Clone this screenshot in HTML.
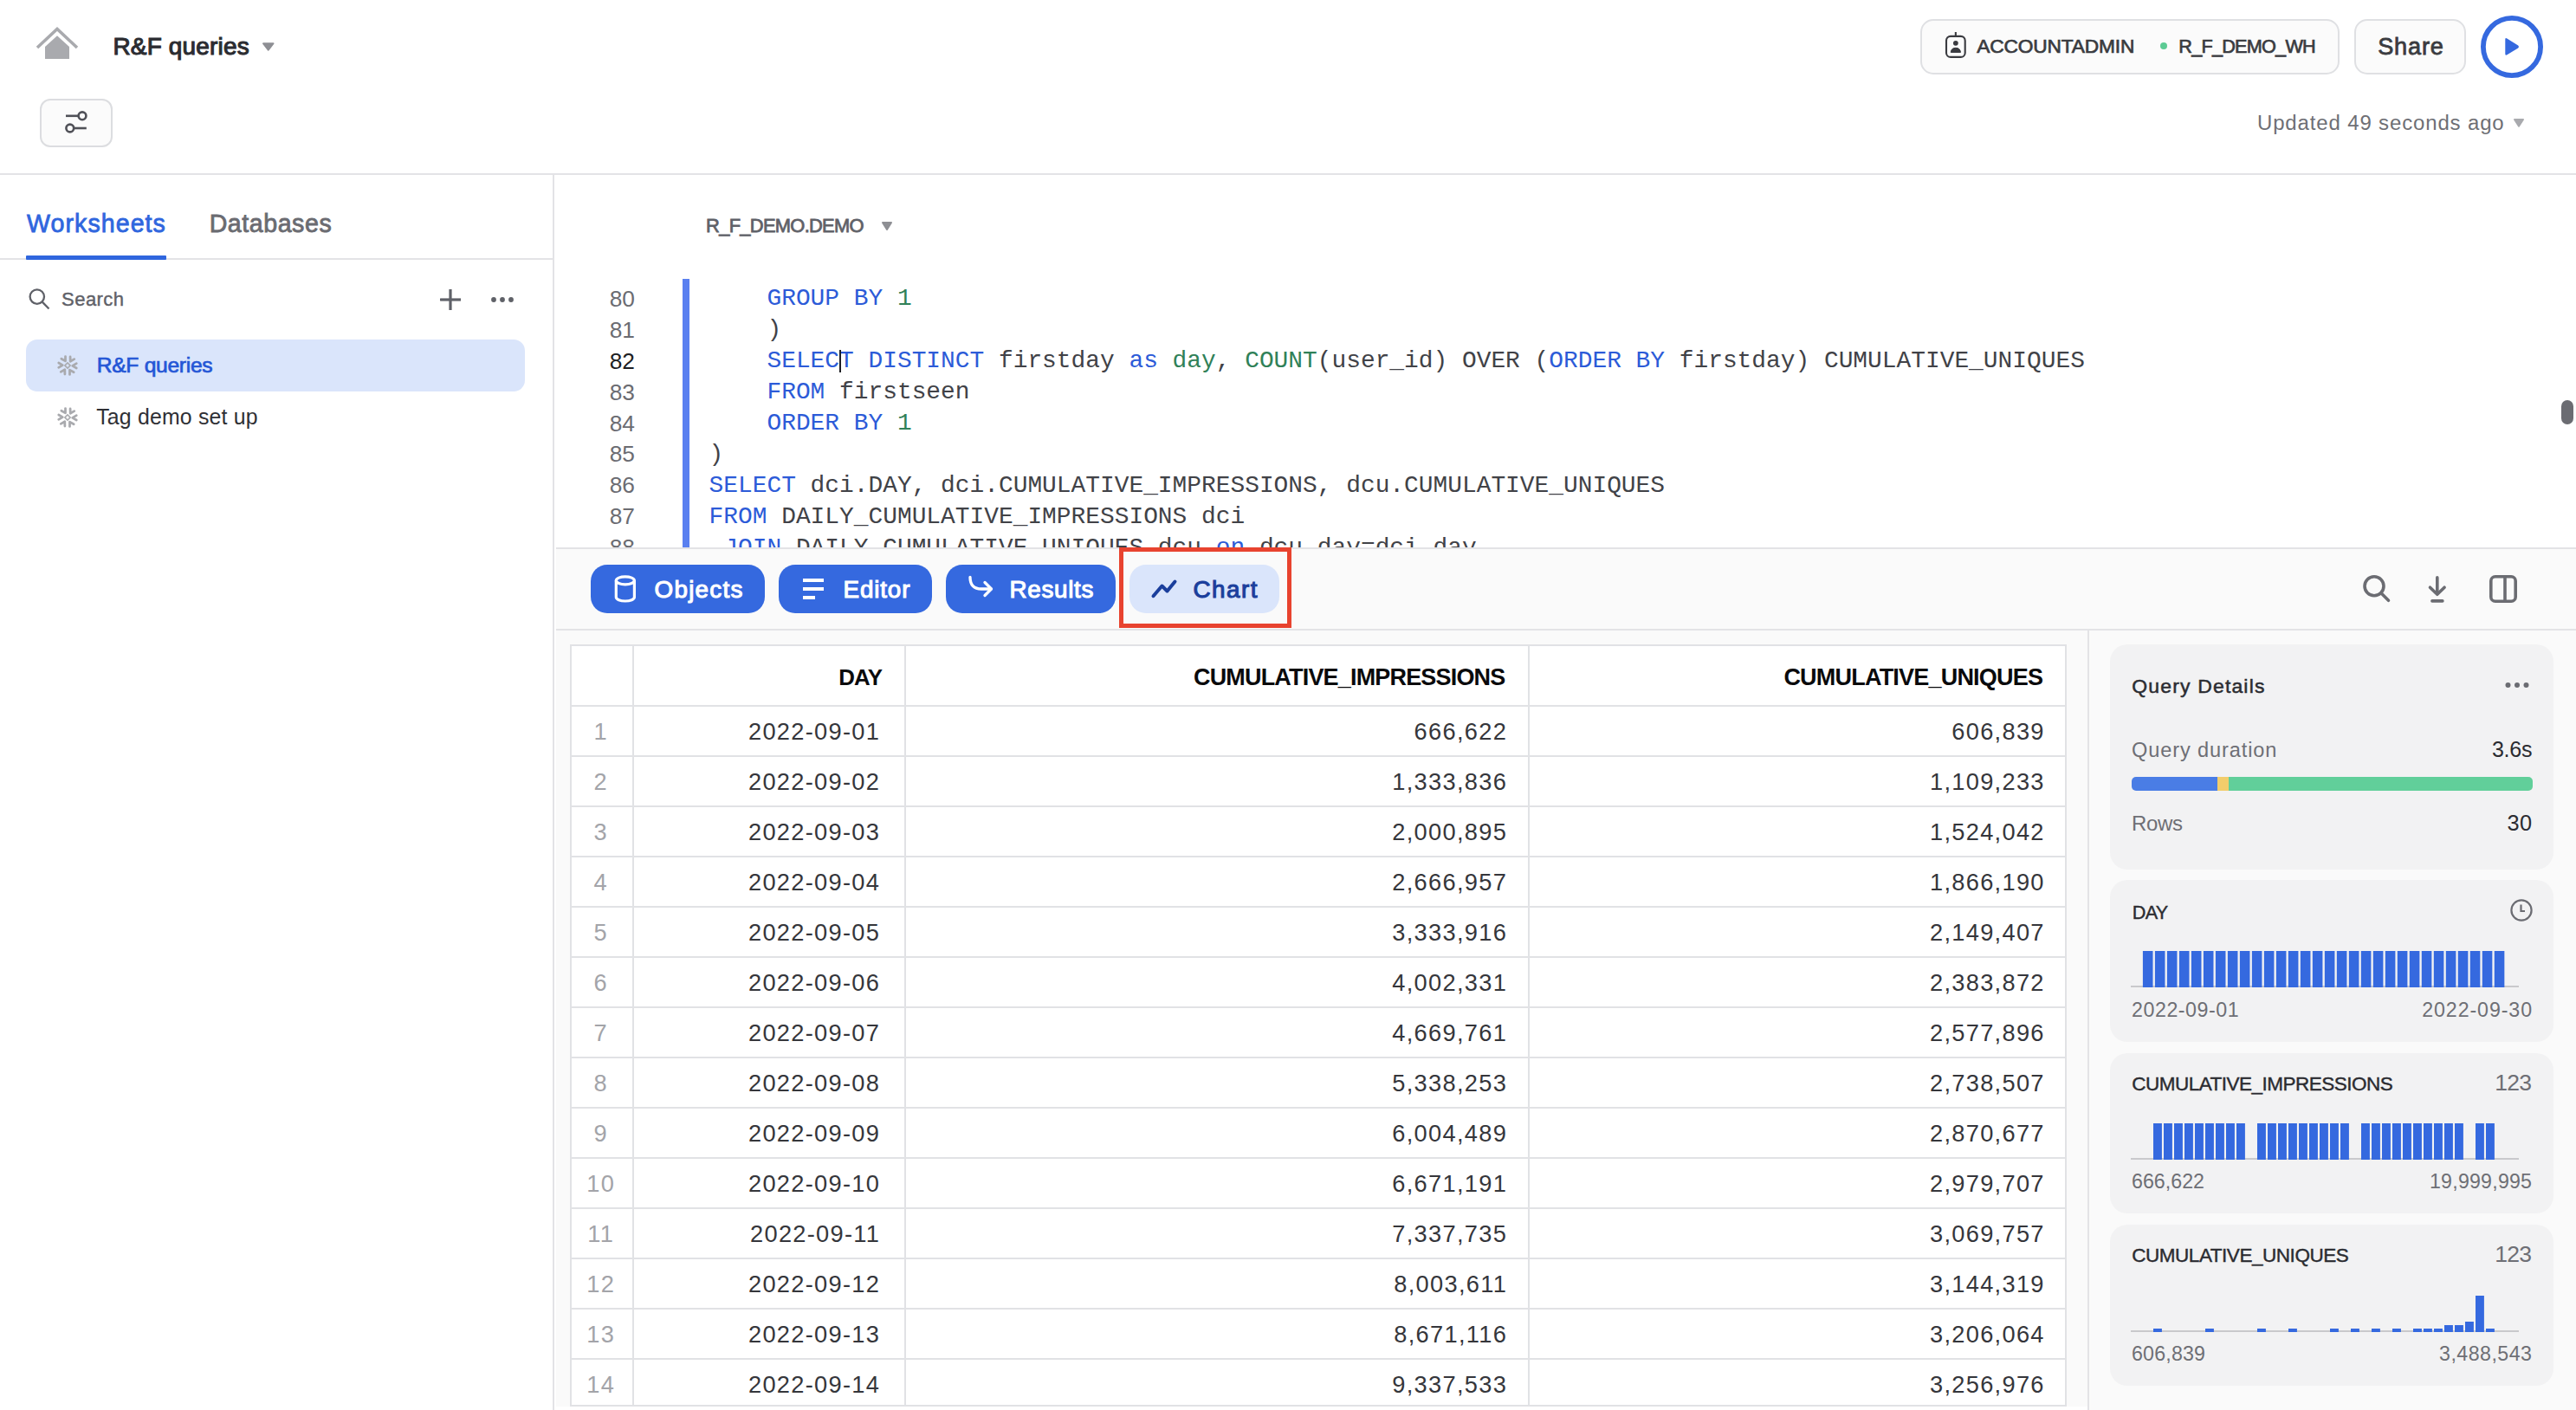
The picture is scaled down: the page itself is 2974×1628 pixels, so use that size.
<!DOCTYPE html>
<html><head><meta charset="utf-8"><title>R&amp;F queries</title>
<style>
html,body{margin:0;padding:0;background:#fff;}
body{width:2974px;height:1628px;position:relative;overflow:hidden;font-family:"Liberation Sans", sans-serif;}
.t{position:absolute;white-space:nowrap;}
.b{position:absolute;}
.code{position:absolute;margin:0;font-family:"Liberation Mono", monospace;white-space:pre;}
</style></head><body>
<div class="b" style="left:0px;top:200px;width:2974px;height:2px;background:#e3e3e6;"></div>
<svg class="b" style="left:40px;top:28px" width="52" height="44" viewBox="0 0 52 44"><path d="M3 27 L26 5.5 L49 27" fill="none" stroke="#a9aaae" stroke-width="3.6"/><path d="M12 26 L26 13.2 L40 26 L40 40 L12 40 Z" fill="#a9aaae"/></svg>
<div class="t" style="left:130.45px;top:40.33px;font-size:27.94px;line-height:27.94px;color:#2b2c31;letter-spacing:0.195px;-webkit-text-stroke:1.1px #2b2c31;">R&amp;F queries</div>
<svg class="b" style="left:300px;top:46px" width="20" height="16" viewBox="0 0 20 16"><path d="M4 4.2 L15.5 4.2 L9.75 11.7 Z" fill="#8e8f94" stroke="#8e8f94" stroke-width="2" stroke-linejoin="round"/></svg>
<div class="b" style="left:46px;top:114px;width:84px;height:56px;background:#fbfbfb;border:2px solid #dcdde0;box-sizing:border-box;border-radius:12px;"></div>
<svg class="b" style="left:70px;top:124px" width="36" height="34" viewBox="0 0 36 34"><line x1="6" y1="9.8" x2="20.5" y2="9.8" stroke="#505158" stroke-width="2.6"/><circle cx="25" cy="9.8" r="4.4" fill="none" stroke="#505158" stroke-width="2.6"/><circle cx="10.8" cy="24" r="4.4" fill="none" stroke="#505158" stroke-width="2.6"/><line x1="15.3" y1="24" x2="29.8" y2="24" stroke="#505158" stroke-width="2.6"/></svg>
<div class="b" style="left:2217px;top:22px;width:484px;height:64px;background:#fbfbfb;border:2px solid #dfe0e3;box-sizing:border-box;border-radius:15px;"></div>
<svg class="b" style="left:2240px;top:34px" width="36" height="36" viewBox="0 0 36 36"><rect x="7" y="7.9" width="21.7" height="24" rx="5" fill="none" stroke="#3a3b40" stroke-width="2.1"/><line x1="17.85" y1="3" x2="17.85" y2="8" stroke="#3a3b40" stroke-width="2.1"/><circle cx="17.85" cy="15.8" r="2.9" fill="#3a3b40"/><path d="M12.2 26.4 Q12.8 21.3 17.85 21.3 Q22.9 21.3 23.5 26.4 Z" fill="#3a3b40" stroke="#3a3b40" stroke-width="1" stroke-linejoin="round"/></svg>
<div class="t" style="left:2282.35px;top:41.83px;font-size:22.73px;line-height:22.73px;color:#3a3b40;letter-spacing:-0.164px;-webkit-text-stroke:0.7px #3a3b40;">ACCOUNTADMIN</div>
<div class="b" style="left:2494px;top:49px;width:8px;height:8px;background:#5ccb94;border-radius:4px;"></div>
<div class="t" style="left:2515.35px;top:42.86px;font-size:21.67px;line-height:21.67px;color:#3a3b40;letter-spacing:-0.770px;-webkit-text-stroke:0.7px #3a3b40;">R_F_DEMO_WH</div>
<div class="b" style="left:2718px;top:22px;width:129px;height:64px;background:#fbfbfb;border:2px solid #dfe0e3;box-sizing:border-box;border-radius:15px;"></div>
<div class="t" style="left:2745.20px;top:39.64px;font-size:27.12px;line-height:27.12px;color:#3a3b40;letter-spacing:0.850px;-webkit-text-stroke:0.8px #3a3b40;">Share</div>
<svg class="b" style="left:2860px;top:14px" width="80" height="80" viewBox="0 0 80 80"><circle cx="40" cy="40" r="33.1" fill="none" stroke="#3569df" stroke-width="5.8"/><path d="M32.3 31.5 L32.3 48.3 Q32.3 50.6 34.4 49.3 L47.2 41.4 Q48.9 39.9 47.2 38.5 L34.4 30.5 Q32.3 29.3 32.3 31.5 Z" fill="#3569df"/></svg>
<div class="t" style="left:2606.00px;top:130.31px;font-size:23.98px;line-height:23.98px;color:#6e6f75;letter-spacing:0.864px;">Updated 49 seconds ago</div>
<svg class="b" style="left:2898px;top:134px" width="20" height="16" viewBox="0 0 20 16"><path d="M5 4 L15 4 L10 11.6 Z" fill="#a9aaae" stroke="#a9aaae" stroke-width="2" stroke-linejoin="round"/></svg>
<div class="b" style="left:638px;top:202px;width:2px;height:1426px;background:#e3e3e6;"></div>
<div class="b" style="left:0px;top:298px;width:638px;height:2px;background:#e3e3e6;"></div>
<div class="t" style="left:31.00px;top:244.11px;font-size:28.58px;line-height:28.58px;color:#2f66de;letter-spacing:1.061px;-webkit-text-stroke:0.8px #2f66de;">Worksheets</div>
<div class="b" style="left:30px;top:295px;width:162px;height:5px;background:#2f66de;border-radius:1px;"></div>
<div class="t" style="left:241.70px;top:244.11px;font-size:28.58px;line-height:28.58px;color:#6a6b71;letter-spacing:0.544px;-webkit-text-stroke:0.8px #6a6b71;">Databases</div>
<svg class="b" style="left:30px;top:330px" width="32" height="32" viewBox="0 0 32 32"><circle cx="12.8" cy="12.6" r="8.2" fill="none" stroke="#5f6168" stroke-width="2.3"/><line x1="18.8" y1="18.6" x2="26.5" y2="26.5" stroke="#5f6168" stroke-width="2.3"/></svg>
<div class="t" style="left:71.10px;top:335.37px;font-size:22.06px;line-height:22.06px;color:#5f6168;letter-spacing:0.410px;-webkit-text-stroke:0.4px #5f6168;">Search</div>
<svg class="b" style="left:504px;top:330px" width="32" height="32" viewBox="0 0 32 32"><line x1="16" y1="4" x2="16" y2="28" stroke="#5f6168" stroke-width="3.2"/><line x1="4" y1="16" x2="28" y2="16" stroke="#5f6168" stroke-width="3.2"/></svg>
<svg class="b" style="left:562px;top:338px" width="36" height="16" viewBox="0 0 36 16"><circle cx="8" cy="8" r="2.9" fill="#5f6168"/><circle cx="18" cy="8" r="2.9" fill="#5f6168"/><circle cx="28" cy="8" r="2.9" fill="#5f6168"/></svg>
<div class="b" style="left:30px;top:392px;width:576px;height:60px;background:#dae5fb;border-radius:13px;"></div>
<svg class="b" style="left:54px;top:398px" width="48" height="48" viewBox="0 0 48 48"><g transform="translate(24 24) scale(0.92) translate(-24 -24)"><g transform="rotate(0 24 24)"><path d="M21.3 12.7 L21.3 18.4 L16.2 15.6" fill="none" stroke="#a9aaae" stroke-width="3" stroke-linecap="round" stroke-linejoin="round"/></g><g transform="rotate(-60 24 24)"><path d="M21.3 12.7 L21.3 18.4 L16.2 15.6" fill="none" stroke="#a9aaae" stroke-width="3" stroke-linecap="round" stroke-linejoin="round"/></g><g transform="rotate(-120 24 24)"><path d="M21.3 12.7 L21.3 18.4 L16.2 15.6" fill="none" stroke="#a9aaae" stroke-width="3" stroke-linecap="round" stroke-linejoin="round"/></g><g transform="rotate(-180 24 24)"><path d="M21.3 12.7 L21.3 18.4 L16.2 15.6" fill="none" stroke="#a9aaae" stroke-width="3" stroke-linecap="round" stroke-linejoin="round"/></g><g transform="rotate(-240 24 24)"><path d="M21.3 12.7 L21.3 18.4 L16.2 15.6" fill="none" stroke="#a9aaae" stroke-width="3" stroke-linecap="round" stroke-linejoin="round"/></g><g transform="rotate(-300 24 24)"><path d="M21.3 12.7 L21.3 18.4 L16.2 15.6" fill="none" stroke="#a9aaae" stroke-width="3" stroke-linecap="round" stroke-linejoin="round"/></g></g><rect x="21.8" y="21.8" width="4.4" height="4.4" transform="rotate(45 24 24)" fill="none" stroke="#a9aaae" stroke-width="1.6"/></svg>
<div class="t" style="left:111.75px;top:410.19px;font-size:24.62px;line-height:24.62px;color:#2456d6;letter-spacing:-0.290px;-webkit-text-stroke:0.7px #2456d6;">R&amp;F queries</div>
<svg class="b" style="left:54px;top:458px" width="48" height="48" viewBox="0 0 48 48"><g transform="translate(24 24) scale(0.92) translate(-24 -24)"><g transform="rotate(0 24 24)"><path d="M21.3 12.7 L21.3 18.4 L16.2 15.6" fill="none" stroke="#a9aaae" stroke-width="3" stroke-linecap="round" stroke-linejoin="round"/></g><g transform="rotate(-60 24 24)"><path d="M21.3 12.7 L21.3 18.4 L16.2 15.6" fill="none" stroke="#a9aaae" stroke-width="3" stroke-linecap="round" stroke-linejoin="round"/></g><g transform="rotate(-120 24 24)"><path d="M21.3 12.7 L21.3 18.4 L16.2 15.6" fill="none" stroke="#a9aaae" stroke-width="3" stroke-linecap="round" stroke-linejoin="round"/></g><g transform="rotate(-180 24 24)"><path d="M21.3 12.7 L21.3 18.4 L16.2 15.6" fill="none" stroke="#a9aaae" stroke-width="3" stroke-linecap="round" stroke-linejoin="round"/></g><g transform="rotate(-240 24 24)"><path d="M21.3 12.7 L21.3 18.4 L16.2 15.6" fill="none" stroke="#a9aaae" stroke-width="3" stroke-linecap="round" stroke-linejoin="round"/></g><g transform="rotate(-300 24 24)"><path d="M21.3 12.7 L21.3 18.4 L16.2 15.6" fill="none" stroke="#a9aaae" stroke-width="3" stroke-linecap="round" stroke-linejoin="round"/></g></g><rect x="21.8" y="21.8" width="4.4" height="4.4" transform="rotate(45 24 24)" fill="none" stroke="#a9aaae" stroke-width="1.6"/></svg>
<div class="t" style="left:111.20px;top:469.97px;font-size:24.85px;line-height:24.85px;color:#2f3035;letter-spacing:0.196px;">Tag demo set up</div>
<div class="t" style="left:815.10px;top:250.46px;font-size:21.89px;line-height:21.89px;color:#5f6168;letter-spacing:-0.696px;-webkit-text-stroke:0.8px #5f6168;">R_F_DEMO.DEMO</div>
<svg class="b" style="left:1014px;top:252px" width="20" height="18" viewBox="0 0 20 18"><path d="M5 5 L15 5 L10 13 Z" fill="#8e8f94" stroke="#8e8f94" stroke-width="2" stroke-linejoin="round"/></svg>
<div class="b" style="left:788px;top:322px;width:8px;height:310px;background:#5a80f0;"></div>
<div class="t" style="left:703.65px;top:331.75px;font-size:26.30px;line-height:26.30px;color:#6b6c72;font-family:"Liberation Mono", monospace;">80</div>
<div class="t" style="left:703.65px;top:367.69px;font-size:26.30px;line-height:26.30px;color:#6b6c72;font-family:"Liberation Mono", monospace;">81</div>
<div class="t" style="left:703.65px;top:403.63px;font-size:26.30px;line-height:26.30px;color:#1e1f24;font-family:"Liberation Mono", monospace;">82</div>
<div class="t" style="left:703.65px;top:439.57px;font-size:26.30px;line-height:26.30px;color:#6b6c72;font-family:"Liberation Mono", monospace;">83</div>
<div class="t" style="left:703.65px;top:475.51px;font-size:26.30px;line-height:26.30px;color:#6b6c72;font-family:"Liberation Mono", monospace;">84</div>
<div class="t" style="left:703.65px;top:511.45px;font-size:26.30px;line-height:26.30px;color:#6b6c72;font-family:"Liberation Mono", monospace;">85</div>
<div class="t" style="left:703.65px;top:547.39px;font-size:26.30px;line-height:26.30px;color:#6b6c72;font-family:"Liberation Mono", monospace;">86</div>
<div class="t" style="left:703.65px;top:583.33px;font-size:26.30px;line-height:26.30px;color:#6b6c72;font-family:"Liberation Mono", monospace;">87</div>
<div class="t" style="left:703.65px;top:619.27px;font-size:26.30px;line-height:26.30px;color:#6b6c72;font-family:"Liberation Mono", monospace;">88</div>
<div class="b" style="left:0;top:0;width:2974px;height:632px;overflow:hidden"><pre class="code" style="left:818.6px;top:327.23px;font-size:27.862px;line-height:35.94px"><span style="color:#414247">    </span><span style="color:#2c5bd8">GROUP</span><span style="color:#414247"> </span><span style="color:#2c5bd8">BY</span><span style="color:#414247"> </span><span style="color:#308158">1</span>
<span style="color:#414247">    )</span>
<span style="color:#414247">    </span><span style="color:#2c5bd8">SELECT</span><span style="color:#414247"> </span><span style="color:#2c5bd8">DISTINCT</span><span style="color:#414247"> firstday </span><span style="color:#2c5bd8">as</span><span style="color:#414247"> </span><span style="color:#308158">day</span><span style="color:#414247">, </span><span style="color:#308158">COUNT</span><span style="color:#414247">(user_id) OVER (</span><span style="color:#2c5bd8">ORDER</span><span style="color:#414247"> </span><span style="color:#2c5bd8">BY</span><span style="color:#414247"> firstday) CUMULATIVE_UNIQUES</span>
<span style="color:#414247">    </span><span style="color:#2c5bd8">FROM</span><span style="color:#414247"> firstseen</span>
<span style="color:#414247">    </span><span style="color:#2c5bd8">ORDER</span><span style="color:#414247"> </span><span style="color:#2c5bd8">BY</span><span style="color:#414247"> </span><span style="color:#308158">1</span>
<span style="color:#414247">)</span>
<span style="color:#2c5bd8">SELECT</span><span style="color:#414247"> dci.DAY, dci.CUMULATIVE_IMPRESSIONS, dcu.CUMULATIVE_UNIQUES</span>
<span style="color:#2c5bd8">FROM</span><span style="color:#414247"> DAILY_CUMULATIVE_IMPRESSIONS dci</span>
<span style="color:#414247"> </span><span style="color:#2c5bd8">JOIN</span><span style="color:#414247"> DAILY_CUMULATIVE_UNIQUES dcu </span><span style="color:#2c5bd8">on</span><span style="color:#414247"> dcu.day=dci.day</span></pre></div>
<div class="b" style="left:969px;top:404px;width:2px;height:26px;background:#1e1f24;"></div>
<div class="b" style="left:2957px;top:462px;width:14px;height:28px;background:#6b6c72;border-radius:7px;"></div>
<div class="b" style="left:642px;top:632px;width:2332px;height:96px;background:#fafafa;"></div>
<div class="b" style="left:642px;top:632px;width:2332px;height:2px;background:#e3e3e6;"></div>
<div class="b" style="left:642px;top:726px;width:2332px;height:2px;background:#e3e3e6;"></div>
<div class="b" style="left:682px;top:652px;width:201px;height:56px;background:#3569df;border-radius:19px;"></div>
<div class="t" style="left:755.55px;top:666.60px;font-size:27.79px;line-height:27.79px;color:#ffffff;letter-spacing:1.275px;-webkit-text-stroke:1.1px #ffffff;">Objects</div>

<svg class="b" style="left:700px;top:658px" width="44" height="44" viewBox="0 0 44 44"><path d="M11.3 12.3 A10.55 4.5 0 0 1 32.4 12.3 L32.4 31.5 A10.55 4.5 0 0 1 11.3 31.5 Z" fill="none" stroke="#fff" stroke-width="3.2"/><path d="M11.3 12.3 A10.55 4.5 0 0 0 32.4 12.3" fill="none" stroke="#fff" stroke-width="3.2"/></svg>
<div class="b" style="left:899px;top:652px;width:177px;height:56px;background:#3569df;border-radius:19px;"></div>
<div class="t" style="left:973.55px;top:666.60px;font-size:27.79px;line-height:27.79px;color:#ffffff;letter-spacing:0.860px;-webkit-text-stroke:1.1px #ffffff;">Editor</div>

<svg class="b" style="left:920px;top:660px" width="40" height="40" viewBox="0 0 40 40"><rect x="7" y="8" width="24" height="4" fill="#fff"/><rect x="7" y="18" width="24" height="4" fill="#fff"/><rect x="7" y="28" width="14" height="4" fill="#fff"/></svg>
<div class="b" style="left:1092px;top:652px;width:196px;height:56px;background:#3569df;border-radius:19px;"></div>
<div class="t" style="left:1165.55px;top:666.60px;font-size:27.79px;line-height:27.79px;color:#ffffff;letter-spacing:0.700px;-webkit-text-stroke:1.1px #ffffff;">Results</div>

<svg class="b" style="left:1112px;top:660px" width="40" height="40" viewBox="0 0 40 40"><path d="M8 6.5 Q8 20 21 20 L32 20" fill="none" stroke="#fff" stroke-width="3.3" stroke-linecap="round"/><path d="M25 12.5 L32.5 20 L25 27.5" fill="none" stroke="#fff" stroke-width="3.3" stroke-linecap="round" stroke-linejoin="round"/></svg>
<div class="b" style="left:1304px;top:652px;width:173px;height:56px;background:#dae5fb;border-radius:19px;"></div>
<div class="t" style="left:1377.55px;top:666.60px;font-size:27.79px;line-height:27.79px;color:#1b3f9c;letter-spacing:1.475px;-webkit-text-stroke:1.1px #1b3f9c;">Chart</div>

<svg class="b" style="left:1324px;top:664px" width="40" height="32" viewBox="0 0 40 32"><path d="M7.5 24.2 L17.5 12.5 L23.5 18.5 L32.5 7.5" fill="none" stroke="#1b3f9c" stroke-width="4" stroke-linecap="round" stroke-linejoin="round"/></svg>
<div class="b" style="left:1292px;top:632px;width:199px;height:93px;border:5px solid #e8432f;box-sizing:border-box;"></div>
<svg class="b" style="left:2722px;top:658px" width="44" height="44" viewBox="0 0 44 44"><circle cx="19" cy="18.8" r="11" fill="none" stroke="#6b6c72" stroke-width="3.6"/><line x1="27" y1="26.8" x2="35.5" y2="35.3" stroke="#6b6c72" stroke-width="3.6" stroke-linecap="round"/></svg>
<svg class="b" style="left:2794px;top:658px" width="40" height="44" viewBox="0 0 40 44"><line x1="19.8" y1="8.8" x2="19.8" y2="27.5" stroke="#6b6c72" stroke-width="3.6" stroke-linecap="round"/><path d="M11.5 20.2 L19.8 28.3 L28.1 20.2" fill="none" stroke="#6b6c72" stroke-width="3.6" stroke-linecap="round" stroke-linejoin="round"/><line x1="13.9" y1="35.9" x2="25.9" y2="35.9" stroke="#6b6c72" stroke-width="3.6" stroke-linecap="round"/></svg>
<svg class="b" style="left:2868px;top:658px" width="44" height="44" viewBox="0 0 44 44"><rect x="7.8" y="7.8" width="28.4" height="28.4" rx="5" fill="none" stroke="#6b6c72" stroke-width="3.6"/><line x1="24" y1="8" x2="24" y2="36" stroke="#6b6c72" stroke-width="3.6"/></svg>
<div class="b" style="left:642px;top:728px;width:2332px;height:900px;background:#fafafa;"></div>
<div class="b" style="left:642px;top:1624px;width:1768px;height:4px;background:#ffffff;"></div>
<div class="b" style="left:2410px;top:728px;width:2px;height:900px;background:#e3e3e6;"></div>
<div class="b" style="left:658px;top:744px;width:1728px;height:880px;background:#ffffff;border:2px solid #e1e2e5;box-sizing:border-box;"></div>
<div class="b" style="left:730px;top:744px;width:2px;height:880px;background:#e1e2e5;"></div>
<div class="b" style="left:1044px;top:744px;width:2px;height:880px;background:#e1e2e5;"></div>
<div class="b" style="left:1764px;top:744px;width:2px;height:880px;background:#e1e2e5;"></div>
<div class="b" style="left:658px;top:814px;width:1728px;height:2px;background:#e1e2e5;"></div>
<div class="b" style="left:658px;top:872px;width:1728px;height:2px;background:#e1e2e5;"></div>
<div class="b" style="left:658px;top:930px;width:1728px;height:2px;background:#e1e2e5;"></div>
<div class="b" style="left:658px;top:988px;width:1728px;height:2px;background:#e1e2e5;"></div>
<div class="b" style="left:658px;top:1046px;width:1728px;height:2px;background:#e1e2e5;"></div>
<div class="b" style="left:658px;top:1104px;width:1728px;height:2px;background:#e1e2e5;"></div>
<div class="b" style="left:658px;top:1162px;width:1728px;height:2px;background:#e1e2e5;"></div>
<div class="b" style="left:658px;top:1220px;width:1728px;height:2px;background:#e1e2e5;"></div>
<div class="b" style="left:658px;top:1278px;width:1728px;height:2px;background:#e1e2e5;"></div>
<div class="b" style="left:658px;top:1336px;width:1728px;height:2px;background:#e1e2e5;"></div>
<div class="b" style="left:658px;top:1394px;width:1728px;height:2px;background:#e1e2e5;"></div>
<div class="b" style="left:658px;top:1452px;width:1728px;height:2px;background:#e1e2e5;"></div>
<div class="b" style="left:658px;top:1510px;width:1728px;height:2px;background:#e1e2e5;"></div>
<div class="b" style="left:658px;top:1568px;width:1728px;height:2px;background:#e1e2e5;"></div>
<div class="t" style="left:968.20px;top:769.87px;font-size:25.87px;line-height:25.87px;color:#0a0a0c;font-weight:700;letter-spacing:-0.750px;">DAY</div>
<div class="t" style="left:1378.00px;top:769.31px;font-size:26.98px;line-height:26.98px;color:#0a0a0c;font-weight:700;letter-spacing:-0.802px;">CUMULATIVE_IMPRESSIONS</div>
<div class="t" style="left:2059.40px;top:769.29px;font-size:27.03px;line-height:27.03px;color:#0a0a0c;font-weight:700;letter-spacing:-0.800px;">CUMULATIVE_UNIQUES</div>
<div class="t" style="left:685.43px;top:830.89px;font-size:27.22px;line-height:27.22px;color:#a3a4a9;letter-spacing:1.300px;">1</div>
<div class="t" style="left:863.95px;top:830.89px;font-size:27.22px;line-height:27.22px;color:#35363b;letter-spacing:1.300px;">2022-09-01</div>
<div class="t" style="left:1632.60px;top:830.89px;font-size:27.22px;line-height:27.22px;color:#35363b;letter-spacing:1.300px;">666,622</div>
<div class="t" style="left:2253.30px;top:830.89px;font-size:27.22px;line-height:27.22px;color:#35363b;letter-spacing:1.300px;">606,839</div>
<div class="t" style="left:685.43px;top:888.89px;font-size:27.22px;line-height:27.22px;color:#a3a4a9;letter-spacing:1.300px;">2</div>
<div class="t" style="left:863.95px;top:888.89px;font-size:27.22px;line-height:27.22px;color:#35363b;letter-spacing:1.300px;">2022-09-02</div>
<div class="t" style="left:1607.30px;top:888.89px;font-size:27.22px;line-height:27.22px;color:#35363b;letter-spacing:1.300px;">1,333,836</div>
<div class="t" style="left:2228.00px;top:888.89px;font-size:27.22px;line-height:27.22px;color:#35363b;letter-spacing:1.300px;">1,109,233</div>
<div class="t" style="left:685.43px;top:946.89px;font-size:27.22px;line-height:27.22px;color:#a3a4a9;letter-spacing:1.300px;">3</div>
<div class="t" style="left:863.95px;top:946.89px;font-size:27.22px;line-height:27.22px;color:#35363b;letter-spacing:1.300px;">2022-09-03</div>
<div class="t" style="left:1607.30px;top:946.89px;font-size:27.22px;line-height:27.22px;color:#35363b;letter-spacing:1.300px;">2,000,895</div>
<div class="t" style="left:2228.00px;top:946.89px;font-size:27.22px;line-height:27.22px;color:#35363b;letter-spacing:1.300px;">1,524,042</div>
<div class="t" style="left:685.43px;top:1004.89px;font-size:27.22px;line-height:27.22px;color:#a3a4a9;letter-spacing:1.300px;">4</div>
<div class="t" style="left:863.95px;top:1004.89px;font-size:27.22px;line-height:27.22px;color:#35363b;letter-spacing:1.300px;">2022-09-04</div>
<div class="t" style="left:1607.30px;top:1004.89px;font-size:27.22px;line-height:27.22px;color:#35363b;letter-spacing:1.300px;">2,666,957</div>
<div class="t" style="left:2228.00px;top:1004.89px;font-size:27.22px;line-height:27.22px;color:#35363b;letter-spacing:1.300px;">1,866,190</div>
<div class="t" style="left:685.43px;top:1062.89px;font-size:27.22px;line-height:27.22px;color:#a3a4a9;letter-spacing:1.300px;">5</div>
<div class="t" style="left:863.95px;top:1062.89px;font-size:27.22px;line-height:27.22px;color:#35363b;letter-spacing:1.300px;">2022-09-05</div>
<div class="t" style="left:1607.30px;top:1062.89px;font-size:27.22px;line-height:27.22px;color:#35363b;letter-spacing:1.300px;">3,333,916</div>
<div class="t" style="left:2228.00px;top:1062.89px;font-size:27.22px;line-height:27.22px;color:#35363b;letter-spacing:1.300px;">2,149,407</div>
<div class="t" style="left:685.43px;top:1120.89px;font-size:27.22px;line-height:27.22px;color:#a3a4a9;letter-spacing:1.300px;">6</div>
<div class="t" style="left:863.95px;top:1120.89px;font-size:27.22px;line-height:27.22px;color:#35363b;letter-spacing:1.300px;">2022-09-06</div>
<div class="t" style="left:1607.30px;top:1120.89px;font-size:27.22px;line-height:27.22px;color:#35363b;letter-spacing:1.300px;">4,002,331</div>
<div class="t" style="left:2228.00px;top:1120.89px;font-size:27.22px;line-height:27.22px;color:#35363b;letter-spacing:1.300px;">2,383,872</div>
<div class="t" style="left:685.43px;top:1178.89px;font-size:27.22px;line-height:27.22px;color:#a3a4a9;letter-spacing:1.300px;">7</div>
<div class="t" style="left:863.95px;top:1178.89px;font-size:27.22px;line-height:27.22px;color:#35363b;letter-spacing:1.300px;">2022-09-07</div>
<div class="t" style="left:1607.30px;top:1178.89px;font-size:27.22px;line-height:27.22px;color:#35363b;letter-spacing:1.300px;">4,669,761</div>
<div class="t" style="left:2228.00px;top:1178.89px;font-size:27.22px;line-height:27.22px;color:#35363b;letter-spacing:1.300px;">2,577,896</div>
<div class="t" style="left:685.43px;top:1236.89px;font-size:27.22px;line-height:27.22px;color:#a3a4a9;letter-spacing:1.300px;">8</div>
<div class="t" style="left:863.95px;top:1236.89px;font-size:27.22px;line-height:27.22px;color:#35363b;letter-spacing:1.300px;">2022-09-08</div>
<div class="t" style="left:1607.30px;top:1236.89px;font-size:27.22px;line-height:27.22px;color:#35363b;letter-spacing:1.300px;">5,338,253</div>
<div class="t" style="left:2228.00px;top:1236.89px;font-size:27.22px;line-height:27.22px;color:#35363b;letter-spacing:1.300px;">2,738,507</div>
<div class="t" style="left:685.43px;top:1294.89px;font-size:27.22px;line-height:27.22px;color:#a3a4a9;letter-spacing:1.300px;">9</div>
<div class="t" style="left:863.95px;top:1294.89px;font-size:27.22px;line-height:27.22px;color:#35363b;letter-spacing:1.300px;">2022-09-09</div>
<div class="t" style="left:1607.30px;top:1294.89px;font-size:27.22px;line-height:27.22px;color:#35363b;letter-spacing:1.300px;">6,004,489</div>
<div class="t" style="left:2228.00px;top:1294.89px;font-size:27.22px;line-height:27.22px;color:#35363b;letter-spacing:1.300px;">2,870,677</div>
<div class="t" style="left:677.23px;top:1352.89px;font-size:27.22px;line-height:27.22px;color:#a3a4a9;letter-spacing:1.300px;">10</div>
<div class="t" style="left:863.95px;top:1352.89px;font-size:27.22px;line-height:27.22px;color:#35363b;letter-spacing:1.300px;">2022-09-10</div>
<div class="t" style="left:1607.30px;top:1352.89px;font-size:27.22px;line-height:27.22px;color:#35363b;letter-spacing:1.300px;">6,671,191</div>
<div class="t" style="left:2228.00px;top:1352.89px;font-size:27.22px;line-height:27.22px;color:#35363b;letter-spacing:1.300px;">2,979,707</div>
<div class="t" style="left:678.23px;top:1410.89px;font-size:27.22px;line-height:27.22px;color:#a3a4a9;letter-spacing:1.300px;">11</div>
<div class="t" style="left:866.00px;top:1410.89px;font-size:27.22px;line-height:27.22px;color:#35363b;letter-spacing:1.300px;">2022-09-11</div>
<div class="t" style="left:1607.30px;top:1410.89px;font-size:27.22px;line-height:27.22px;color:#35363b;letter-spacing:1.300px;">7,337,735</div>
<div class="t" style="left:2228.00px;top:1410.89px;font-size:27.22px;line-height:27.22px;color:#35363b;letter-spacing:1.300px;">3,069,757</div>
<div class="t" style="left:677.23px;top:1468.89px;font-size:27.22px;line-height:27.22px;color:#a3a4a9;letter-spacing:1.300px;">12</div>
<div class="t" style="left:863.95px;top:1468.89px;font-size:27.22px;line-height:27.22px;color:#35363b;letter-spacing:1.300px;">2022-09-12</div>
<div class="t" style="left:1609.30px;top:1468.89px;font-size:27.22px;line-height:27.22px;color:#35363b;letter-spacing:1.300px;">8,003,611</div>
<div class="t" style="left:2228.00px;top:1468.89px;font-size:27.22px;line-height:27.22px;color:#35363b;letter-spacing:1.300px;">3,144,319</div>
<div class="t" style="left:677.23px;top:1526.89px;font-size:27.22px;line-height:27.22px;color:#a3a4a9;letter-spacing:1.300px;">13</div>
<div class="t" style="left:863.95px;top:1526.89px;font-size:27.22px;line-height:27.22px;color:#35363b;letter-spacing:1.300px;">2022-09-13</div>
<div class="t" style="left:1609.30px;top:1526.89px;font-size:27.22px;line-height:27.22px;color:#35363b;letter-spacing:1.300px;">8,671,116</div>
<div class="t" style="left:2228.00px;top:1526.89px;font-size:27.22px;line-height:27.22px;color:#35363b;letter-spacing:1.300px;">3,206,064</div>
<div class="t" style="left:677.23px;top:1584.89px;font-size:27.22px;line-height:27.22px;color:#a3a4a9;letter-spacing:1.300px;">14</div>
<div class="t" style="left:863.95px;top:1584.89px;font-size:27.22px;line-height:27.22px;color:#35363b;letter-spacing:1.300px;">2022-09-14</div>
<div class="t" style="left:1607.30px;top:1584.89px;font-size:27.22px;line-height:27.22px;color:#35363b;letter-spacing:1.300px;">9,337,533</div>
<div class="t" style="left:2228.00px;top:1584.89px;font-size:27.22px;line-height:27.22px;color:#35363b;letter-spacing:1.300px;">3,256,976</div>
<div class="b" style="left:2436px;top:744px;width:512px;height:260px;background:#f2f2f3;border-radius:20px;"></div>
<div class="t" style="left:2461.25px;top:781.02px;font-size:22.97px;line-height:22.97px;color:#2b2c31;letter-spacing:1.167px;-webkit-text-stroke:0.5px #2b2c31;">Query Details</div>
<svg class="b" style="left:2886px;top:782px" width="40" height="18" viewBox="0 0 40 18"><circle cx="9.5" cy="9" r="3" fill="#6b6c72"/><circle cx="20" cy="9" r="3" fill="#6b6c72"/><circle cx="30.5" cy="9" r="3" fill="#6b6c72"/></svg>
<div class="t" style="left:2461.00px;top:854.83px;font-size:23.55px;line-height:23.55px;color:#6e6f75;letter-spacing:0.892px;">Query duration</div>
<div class="t" style="left:2877.00px;top:853.26px;font-size:25.07px;line-height:25.07px;color:#2b2c31;letter-spacing:-0.317px;">3.6s</div>
<svg class="b" style="left:2461px;top:897px" width="463" height="16" viewBox="0 0 463 16"><defs><clipPath id="cb"><rect x="0" y="0" width="463" height="16" rx="5"/></clipPath></defs><g clip-path="url(#cb)"><rect x="0" y="0" width="99" height="16" fill="#4a7de5"/><rect x="99" y="0" width="13" height="16" fill="#f2cd6b"/><rect x="112" y="0" width="351" height="16" fill="#61cf9a"/></g></svg>
<div class="t" style="left:2461.00px;top:938.81px;font-size:23.98px;line-height:23.98px;color:#6e6f75;letter-spacing:-0.333px;">Rows</div>
<div class="t" style="left:2894.40px;top:938.12px;font-size:25.36px;line-height:25.36px;color:#2b2c31;letter-spacing:0.500px;">30</div>
<div class="b" style="left:2436px;top:1016px;width:512px;height:187px;background:#f2f2f3;border-radius:20px;"></div>
<div class="t" style="left:2461.80px;top:1042.58px;font-size:21.65px;line-height:21.65px;color:#2b2c31;letter-spacing:-0.800px;-webkit-text-stroke:0.4px #2b2c31;">DAY</div>
<svg class="b" style="left:2894px;top:1035px" width="34" height="34" viewBox="0 0 34 34"><circle cx="17" cy="16" r="11.6" fill="none" stroke="#6b6c72" stroke-width="2.2"/><path d="M16.5 9.5 L16.5 17 L21 17" fill="none" stroke="#6b6c72" stroke-width="2.2"/></svg>
<div class="b" style="left:2460px;top:1138px;width:448px;height:2px;background:#c9c9cc;"></div>
<svg class="b" style="left:2473px;top:1098px" width="420" height="42" viewBox="0 0 420 42"><rect x="0.90" y="0" width="11.6" height="42" fill="#3569df"/><rect x="14.89" y="0" width="11.6" height="42" fill="#3569df"/><rect x="28.89" y="0" width="11.6" height="42" fill="#3569df"/><rect x="42.89" y="0" width="11.6" height="42" fill="#3569df"/><rect x="56.88" y="0" width="11.6" height="42" fill="#3569df"/><rect x="70.88" y="0" width="11.6" height="42" fill="#3569df"/><rect x="84.87" y="0" width="11.6" height="42" fill="#3569df"/><rect x="98.87" y="0" width="11.6" height="42" fill="#3569df"/><rect x="112.86" y="0" width="11.6" height="42" fill="#3569df"/><rect x="126.86" y="0" width="11.6" height="42" fill="#3569df"/><rect x="140.85" y="0" width="11.6" height="42" fill="#3569df"/><rect x="154.85" y="0" width="11.6" height="42" fill="#3569df"/><rect x="168.84" y="0" width="11.6" height="42" fill="#3569df"/><rect x="182.84" y="0" width="11.6" height="42" fill="#3569df"/><rect x="196.83" y="0" width="11.6" height="42" fill="#3569df"/><rect x="210.83" y="0" width="11.6" height="42" fill="#3569df"/><rect x="224.82" y="0" width="11.6" height="42" fill="#3569df"/><rect x="238.82" y="0" width="11.6" height="42" fill="#3569df"/><rect x="252.81" y="0" width="11.6" height="42" fill="#3569df"/><rect x="266.81" y="0" width="11.6" height="42" fill="#3569df"/><rect x="280.80" y="0" width="11.6" height="42" fill="#3569df"/><rect x="294.80" y="0" width="11.6" height="42" fill="#3569df"/><rect x="308.79" y="0" width="11.6" height="42" fill="#3569df"/><rect x="322.78" y="0" width="11.6" height="42" fill="#3569df"/><rect x="336.78" y="0" width="11.6" height="42" fill="#3569df"/><rect x="350.78" y="0" width="11.6" height="42" fill="#3569df"/><rect x="364.77" y="0" width="11.6" height="42" fill="#3569df"/><rect x="378.76" y="0" width="11.6" height="42" fill="#3569df"/><rect x="392.76" y="0" width="11.6" height="42" fill="#3569df"/><rect x="406.76" y="0" width="11.6" height="42" fill="#3569df"/></svg>
<div class="t" style="left:2461.00px;top:1154.60px;font-size:23.21px;line-height:23.21px;color:#6e6f75;letter-spacing:0.556px;">2022-09-01</div>
<div class="t" style="left:2796.20px;top:1154.60px;font-size:23.21px;line-height:23.21px;color:#6e6f75;letter-spacing:0.911px;">2022-09-30</div>
<div class="b" style="left:2436px;top:1216px;width:512px;height:185px;background:#f2f2f3;border-radius:20px;"></div>
<div class="t" style="left:2461.20px;top:1241.25px;font-size:22.50px;line-height:22.50px;color:#2b2c31;letter-spacing:-0.507px;-webkit-text-stroke:0.4px #2b2c31;">CUMULATIVE_IMPRESSIONS</div>
<div class="t" style="left:2880.30px;top:1236.72px;font-size:26.56px;line-height:26.56px;color:#6e6f75;letter-spacing:-0.800px;">123</div>
<div class="b" style="left:2460px;top:1337px;width:448px;height:2px;background:#c9c9cc;"></div>
<svg class="b" style="left:2486px;top:1297px" width="410" height="42" viewBox="0 0 410 42"><rect x="0.00" y="0" width="9.9" height="42" fill="#3569df"/><rect x="12.00" y="0" width="9.9" height="42" fill="#3569df"/><rect x="24.00" y="0" width="9.9" height="42" fill="#3569df"/><rect x="36.00" y="0" width="9.9" height="42" fill="#3569df"/><rect x="48.00" y="0" width="9.9" height="42" fill="#3569df"/><rect x="60.00" y="0" width="9.9" height="42" fill="#3569df"/><rect x="72.00" y="0" width="9.9" height="42" fill="#3569df"/><rect x="84.00" y="0" width="9.9" height="42" fill="#3569df"/><rect x="96.00" y="0" width="9.9" height="42" fill="#3569df"/><rect x="120.00" y="0" width="9.9" height="42" fill="#3569df"/><rect x="132.00" y="0" width="9.9" height="42" fill="#3569df"/><rect x="144.00" y="0" width="9.9" height="42" fill="#3569df"/><rect x="156.00" y="0" width="9.9" height="42" fill="#3569df"/><rect x="168.00" y="0" width="9.9" height="42" fill="#3569df"/><rect x="180.00" y="0" width="9.9" height="42" fill="#3569df"/><rect x="192.00" y="0" width="9.9" height="42" fill="#3569df"/><rect x="204.00" y="0" width="9.9" height="42" fill="#3569df"/><rect x="216.00" y="0" width="9.9" height="42" fill="#3569df"/><rect x="240.00" y="0" width="9.9" height="42" fill="#3569df"/><rect x="252.00" y="0" width="9.9" height="42" fill="#3569df"/><rect x="264.00" y="0" width="9.9" height="42" fill="#3569df"/><rect x="276.00" y="0" width="9.9" height="42" fill="#3569df"/><rect x="288.00" y="0" width="9.9" height="42" fill="#3569df"/><rect x="300.00" y="0" width="9.9" height="42" fill="#3569df"/><rect x="312.00" y="0" width="9.9" height="42" fill="#3569df"/><rect x="324.00" y="0" width="9.9" height="42" fill="#3569df"/><rect x="336.00" y="0" width="9.9" height="42" fill="#3569df"/><rect x="348.00" y="0" width="9.9" height="42" fill="#3569df"/><rect x="372.00" y="0" width="9.9" height="42" fill="#3569df"/><rect x="384.00" y="0" width="9.9" height="42" fill="#3569df"/></svg>
<div class="t" style="left:2461.00px;top:1353.40px;font-size:23.21px;line-height:23.21px;color:#6e6f75;letter-spacing:0.025px;">666,622</div>
<div class="t" style="left:2805.00px;top:1353.40px;font-size:23.21px;line-height:23.21px;color:#6e6f75;letter-spacing:0.211px;">19,999,995</div>
<div class="b" style="left:2436px;top:1414px;width:512px;height:186px;background:#f2f2f3;border-radius:20px;"></div>
<div class="t" style="left:2461.20px;top:1439.45px;font-size:22.50px;line-height:22.50px;color:#2b2c31;letter-spacing:-0.456px;-webkit-text-stroke:0.4px #2b2c31;">CUMULATIVE_UNIQUES</div>
<div class="t" style="left:2880.30px;top:1434.92px;font-size:26.56px;line-height:26.56px;color:#6e6f75;letter-spacing:-0.800px;">123</div>
<div class="b" style="left:2460px;top:1536px;width:448px;height:2px;background:#c9c9cc;"></div>
<svg class="b" style="left:2486px;top:1496px" width="410" height="42" viewBox="0 0 410 42"><rect x="0.00" y="38" width="9.9" height="4" fill="#3569df"/><rect x="60.00" y="38" width="9.9" height="4" fill="#3569df"/><rect x="120.00" y="38" width="9.9" height="4" fill="#3569df"/><rect x="156.00" y="38" width="9.9" height="4" fill="#3569df"/><rect x="204.00" y="38" width="9.9" height="4" fill="#3569df"/><rect x="228.00" y="38" width="9.9" height="4" fill="#3569df"/><rect x="252.00" y="38" width="9.9" height="4" fill="#3569df"/><rect x="276.00" y="38" width="9.9" height="4" fill="#3569df"/><rect x="300.00" y="38" width="9.9" height="4" fill="#3569df"/><rect x="312.00" y="38" width="9.9" height="4" fill="#3569df"/><rect x="324.00" y="38" width="9.9" height="4" fill="#3569df"/><rect x="336.00" y="34" width="9.9" height="8" fill="#3569df"/><rect x="348.00" y="34" width="9.9" height="8" fill="#3569df"/><rect x="360.00" y="30" width="9.9" height="12" fill="#3569df"/><rect x="372.00" y="0" width="9.9" height="42" fill="#3569df"/><rect x="384.00" y="38" width="9.9" height="4" fill="#3569df"/></svg>
<div class="t" style="left:2461.00px;top:1552.40px;font-size:23.21px;line-height:23.21px;color:#6e6f75;letter-spacing:0.192px;">606,839</div>
<div class="t" style="left:2816.00px;top:1552.40px;font-size:23.21px;line-height:23.21px;color:#6e6f75;letter-spacing:0.475px;">3,488,543</div>
</body></html>
